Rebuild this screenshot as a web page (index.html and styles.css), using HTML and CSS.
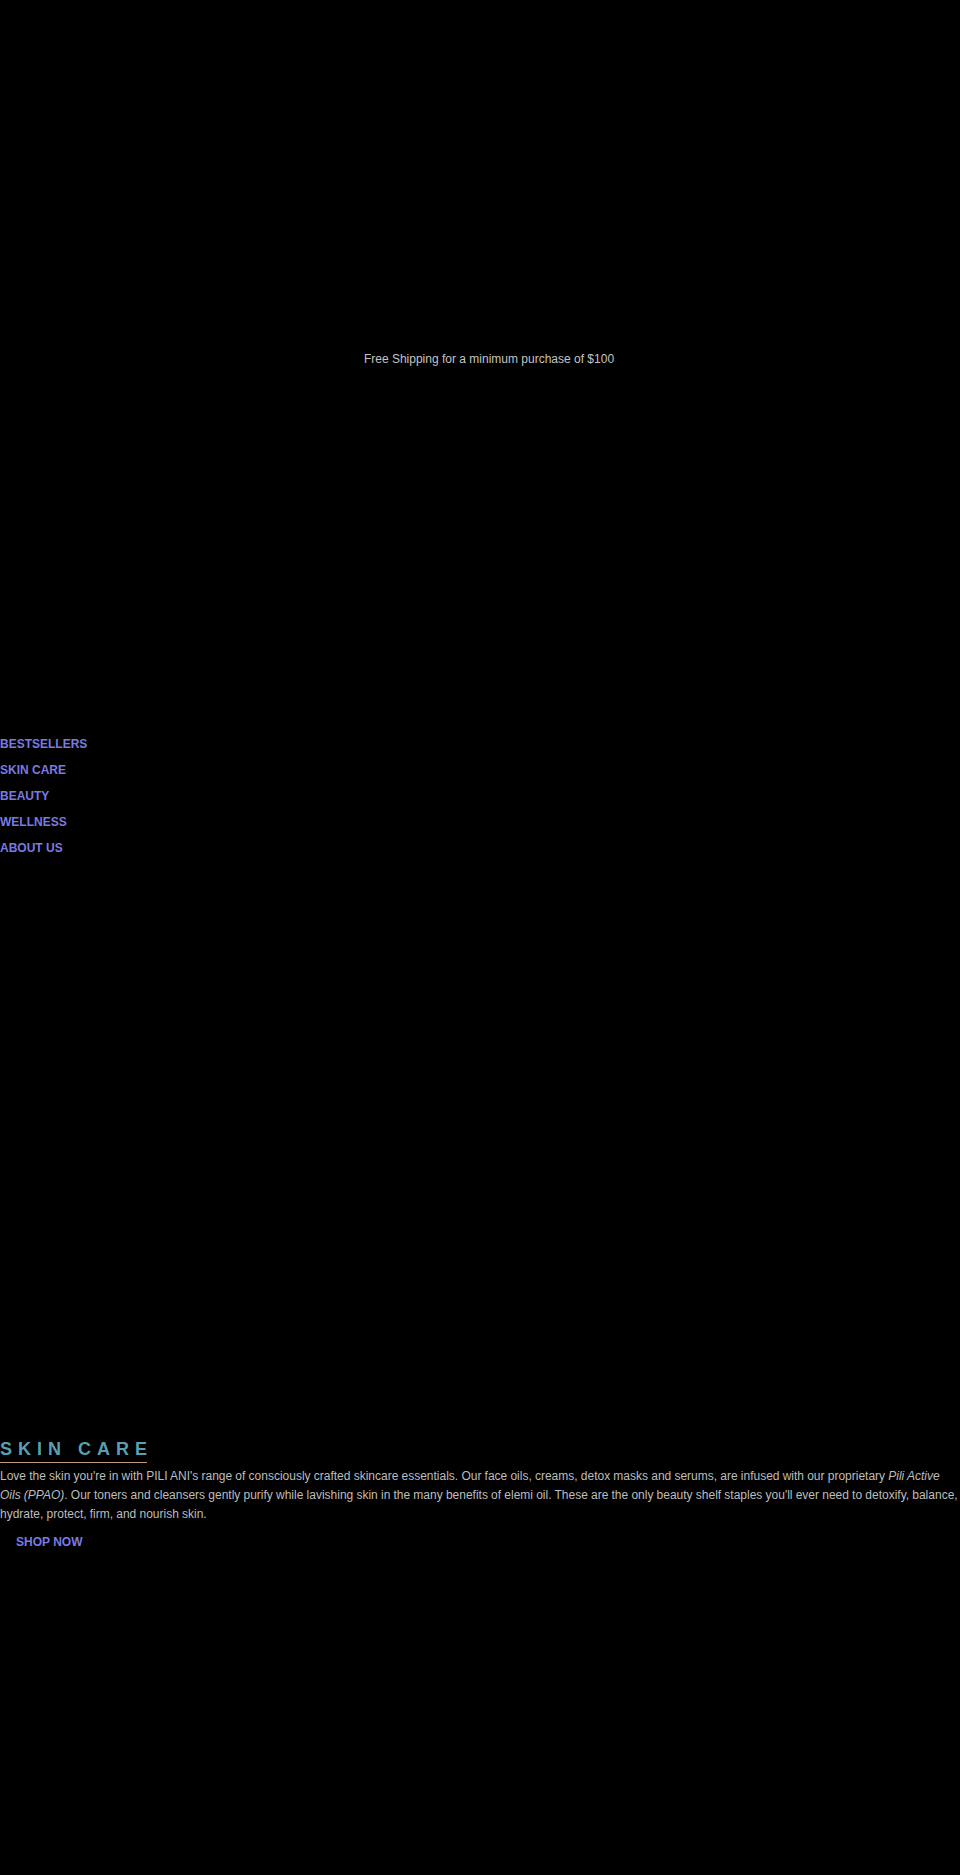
FILE: index.html
```html
<!DOCTYPE html>
<html lang="en">
<head>
<meta charset="utf-8">
<title>PILI ANI</title>
<link rel="stylesheet" href="styles.css">
</head>
<body>
<div class="announce">Free Shipping for a minimum purchase of $100</div>
<ul class="nav">
  <li><a href="#">BESTSELLERS</a></li>
  <li><a href="#">SKIN CARE</a></li>
  <li><a href="#">BEAUTY</a></li>
  <li><a href="#">WELLNESS</a></li>
  <li><a href="#">ABOUT US</a></li>
</ul>
<section class="feature">
  <h2 class="feature-title">SKIN CAR<span class="last">E</span></h2>
  <p class="feature-text">Love the skin you're in with PILI ANI's range of consciously crafted skincare essentials. Our face oils, creams, detox masks and serums, are infused with our proprietary <em>Pili Active Oils (PPAO)</em>. Our toners and cleansers gently purify while lavishing skin in the many benefits of elemi oil. These are the only beauty shelf staples you'll ever need to detoxify, balance, hydrate, protect, firm, and nourish skin.</p>
  <a class="shop" href="#">SHOP NOW</a>
</section>
</body>
</html>
```
FILE: styles.css
```css
html, body {
  margin: 0;
  padding: 0;
  background: #000;
  font-family: "Liberation Sans", Arial, sans-serif;
}
body {
  min-height: 1875px;
}
.announce {
  padding: 351px 0 0 18px;
  line-height: 16px;
  font-size: 12px;
  color: #c4c4c4;
  text-align: center;
}
.nav {
  list-style: none;
  margin: 364px 0 0;
  padding: 0;
}
.nav li {
  font-size: 12px;
  line-height: 26px;
}
.nav a {
  font-weight: bold;
  color: #7a7ae0;
  text-decoration: none;
}
.feature {
  margin-top: 577px;
}
.feature-title {
  display: inline-block;
  margin: 0;
  padding-bottom: 2px;
  border-bottom: 1px solid #c49a7c;
  font-size: 18px;
  line-height: 22px;
  font-weight: bold;
  letter-spacing: 6px;
  color: #5a9fb0;
}
.feature-title .last {
  letter-spacing: 0;
}
.feature-text {
  margin: 4px 0 0;
  font-size: 12px;
  line-height: 19px;
  word-spacing: -0.15px;
  color: #bdbdbd;
}
.shop {
  display: inline-block;
  margin-top: 10px;
  padding: 0 16px;
  line-height: 16px;
  font-size: 12px;
  font-weight: bold;
  color: #7a7ae0;
  text-decoration: none;
}
```
